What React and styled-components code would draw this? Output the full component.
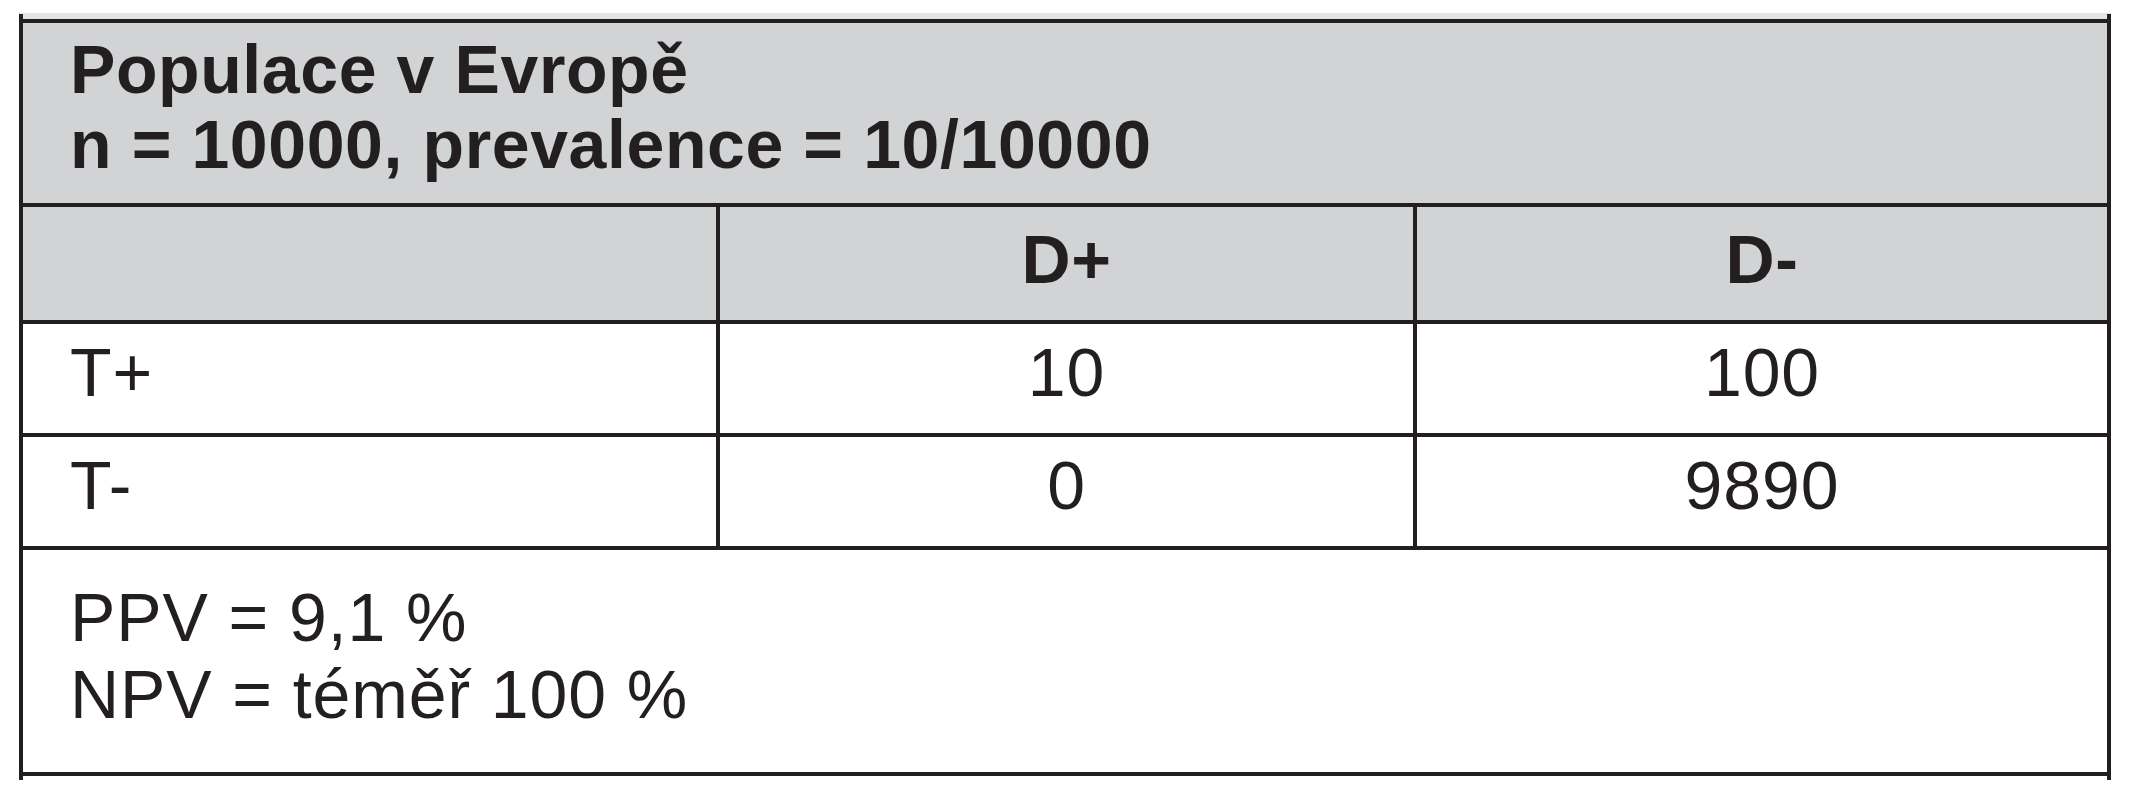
import React from "react";
import styled, { createGlobalStyle } from "styled-components";

const Global = createGlobalStyle`
  html, body {
    margin: 0;
    padding: 0;
    background: #ffffff;
  }
  body {
    font-family: "Liberation Sans", Arial, Helvetica, sans-serif;
    color: #231f20;
  }
`;

const Page = styled.div`
  padding: 19px 0 0 19px;
  width: 2132px;
  height: 800px;
  box-sizing: border-box;
  background: #ffffff;
`;

const Table = styled.div`
  position: relative;
  display: grid;
  grid-template-columns: 693px 693px 690px;
  grid-template-rows: 180px 113px 109px 109px 222px;
  gap: 4px;
  padding: 4px;
  width: 2092px;
  box-sizing: border-box;
  background: #231f20;
  box-shadow: 0 -6px 0 #e3e4e5;

  &::before,
  &::after {
    content: "";
    position: absolute;
    top: -5px;
    bottom: -4px;
    width: 4px;
    background: #231f20;
  }
  &::before {
    left: 0;
  }
  &::after {
    right: 0;
  }
`;

const Cell = styled.div`
  box-sizing: border-box;
  background: ${(p) => (p.$shaded ? "#d1d3d4" : "#ffffff")};
  grid-column: ${(p) => (p.$span ? `span ${p.$span}` : "auto")};
  padding: ${(p) => p.$pt || 0}px 0 0 ${(p) => (p.$center ? 0 : 47)}px;
  text-align: ${(p) => (p.$center ? "center" : "left")};
  font-size: 68px;
  line-height: ${(p) => p.$lh || 76}px;
  font-weight: ${(p) => (p.$bold ? 700 : 400)};
  letter-spacing: ${(p) => (p.$bold ? 0.6 : 0.9)}px;
  color: #231f20;
  white-space: nowrap;
`;

const Line = styled.div`
  display: block;
`;

const rows = [
  { label: "T+", pos: "10", neg: "100" },
  { label: "T-", pos: "0", neg: "9890" },
];

export default function App() {
  return (
    <>
      <Global />
      <Page>
        <Table>
          <Cell $shaded $bold $span={3} $pt={9} $lh={75}>
            <Line>Populace v Evropě</Line>
            <Line>n = 10000, prevalence = 10/10000</Line>
          </Cell>
          <Cell $shaded />
          <Cell $shaded $bold $center $pt={14}>D+</Cell>
          <Cell $shaded $bold $center $pt={14}>D-</Cell>
          {rows.map((r) => (
            <React.Fragment key={r.label}>
              <Cell $pt={10}>{r.label}</Cell>
              <Cell $center $pt={10}>{r.pos}</Cell>
              <Cell $center $pt={10}>{r.neg}</Cell>
            </React.Fragment>
          ))}
          <Cell $span={3} $pt={29} $lh={77}>
            <Line>PPV = 9,1 %</Line>
            <Line>NPV = téměř 100 %</Line>
          </Cell>
        </Table>
      </Page>
    </>
  );
}
